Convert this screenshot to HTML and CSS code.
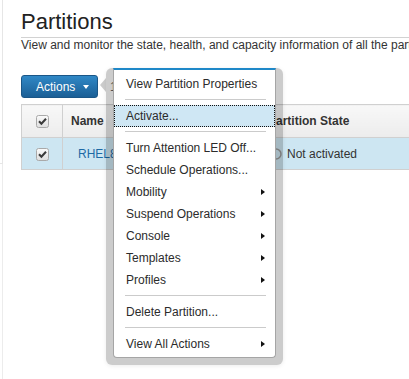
FILE: index.html
```html
<!DOCTYPE html>
<html lang="en">
<head>
    <meta charset="UTF-8">
    <meta name="viewport" content="width=device-width, initial-scale=1.0">
    <title>Partitions</title>
    <link rel="stylesheet" href="styles.css">
</head>
<body>

<div class="page">
    <!-- collapsed side navigation edge -->
    <div class="rail">
        <div class="rail-top"></div>
        <div class="rail-bottom"></div>
    </div>

    <main class="content">
        <h1>Partitions</h1>
        <p class="desc">View and monitor the state, health, and capacity information of all the partitions on the system.</p>

        <div class="toolbar">
            <button class="actions-btn">Actions <span class="caret"></span></button>
            <span class="sel-count">1 of 1 selected</span>
        </div>

        <table class="grid">
            <tr class="head">
                <th class="col-check">
                    <svg class="cb" width="13" height="13" viewBox="0 0 13 13">
                        <defs>
                            <linearGradient id="cbg" x1="0" y1="0" x2="0" y2="1">
                                <stop offset="0" stop-color="#fbfbfb"/>
                                <stop offset="1" stop-color="#dedede"/>
                            </linearGradient>
                        </defs>
                        <rect x="0.5" y="0.5" width="12" height="12" rx="2" fill="url(#cbg)" stroke="#a9a9a9"/>
                        <path d="M3 6.3 L5.4 8.8 L10 3.8" fill="none" stroke="#3a3a3a" stroke-width="2"/>
                    </svg>
                </th>
                <th class="col-name">Name</th>
                <th class="col-state">Partition State</th>
            </tr>
            <tr class="row selected">
                <td class="col-check">
                    <svg class="cb" width="13" height="13" viewBox="0 0 13 13">
                        <rect x="0.5" y="0.5" width="12" height="12" rx="2" fill="url(#cbg)" stroke="#a9a9a9"/>
                        <path d="M3 6.3 L5.4 8.8 L10 3.8" fill="none" stroke="#3a3a3a" stroke-width="2"/>
                    </svg>
                </td>
                <td class="col-name"><a href="#" class="name-link">RHEL8_LPAR_01</a></td>
                <td class="col-state">
                    <span class="state">
                        <svg width="12" height="12" viewBox="0 0 12 12"><circle cx="6" cy="6" r="5" fill="none" stroke="#9a9a9a" stroke-width="1.5"/></svg>
                        Not activated
                    </span>
                </td>
            </tr>
        </table>
    </main>
</div>

<!-- Actions popover menu -->
<div class="popover">
    <div class="pop-arrow"></div>
    <div class="pop-frame">
        <ul class="menu">
            <li class="item">View Partition Properties</li>
            <li class="sep"></li>
            <li class="item focused">Activate...</li>
            <li class="sep"></li>
            <li class="item">Turn Attention LED Off...</li>
            <li class="item">Schedule Operations...</li>
            <li class="item sub">Mobility</li>
            <li class="item sub">Suspend Operations</li>
            <li class="item sub">Console</li>
            <li class="item sub">Templates</li>
            <li class="item sub">Profiles</li>
            <li class="sep"></li>
            <li class="item">Delete Partition...</li>
            <li class="sep"></li>
            <li class="item sub">View All Actions</li>
        </ul>
    </div>
</div>

</body>
</html>
```

FILE: styles.css
```css
body {
    margin: 0;
    font-family: "Liberation Sans", Arial, sans-serif;
    font-size: 12px;
    color: #333;
    background: #fff;
    overflow: hidden;
}
.page {
    display: flex;
    height: 379px;
}
.rail {
    width: 3px;
    flex: none;
    display: flex;
    flex-direction: column;
}
.rail-top {
    height: 163px;
    border-right: 1px solid #e6e6e6;
    border-bottom: 1px solid #e6e6e6;
}
.rail-bottom {
    flex: 1;
    border-right: 1px solid #ececec;
}
.content {
    flex: 1;
    min-width: 0;
    padding-left: 18px;
    overflow: hidden;
}
h1 {
    margin: 9px 0 0;
    font-size: 22px;
    line-height: 26px;
    font-weight: normal;
    color: #222;
    padding-bottom: 2px;
    border-bottom: 1px solid #d2d2d2;
}
.desc {
    margin: 0;
    line-height: 14px;
    white-space: nowrap;
    color: #333;
}
.toolbar {
    display: flex;
    align-items: center;
    margin-top: 23px;
}
.actions-btn {
    display: flex;
    align-items: center;
    height: 23px;
    width: 77px;
    padding: 0 0 0 14px;
    font-family: inherit;
    font-size: 12px;
    color: #fff;
    background: linear-gradient(#3088c6, #1b5f96);
    border: 1px solid #1a5687;
    border-radius: 3px;
}
.caret {
    margin-left: 8px;
    width: 0;
    height: 0;
    border-left: 3.5px solid transparent;
    border-right: 3.5px solid transparent;
    border-top: 4px solid #fff;
}
.sel-count {
    margin-left: 12px;
    color: #666;
}
.grid {
    margin-top: 6px;
    border-collapse: collapse;
    width: 520px;
    table-layout: fixed;
}
.grid th, .grid td {
    border: 1px solid #d0d0d0;
    text-align: left;
    white-space: nowrap;
    overflow: hidden;
}
.head th {
    height: 32px;
    background: linear-gradient(#f8f8f8, #ececec);
    font-weight: bold;
    padding: 0 8px;
}
.row td {
    height: 31px;
    padding: 0 8px;
}
.row.selected td {
    background: #cde6f2;
}
.col-check {
    width: 40px;
    text-align: center !important;
    padding: 0 !important;
}
.cb {
    display: block;
    margin: 1px auto 0;
}
.col-name {
    width: 180px;
}
.row .col-name {
    padding-left: 15px;
}
.name-link {
    color: #1d6aa5;
    text-decoration: none;
}
.row .col-state {
    padding-left: 10px;
}
.state {
    display: flex;
    align-items: center;
    gap: 5px;
}

/* popover menu */
.popover {
    position: absolute;
    left: 100px;
    top: 68px;
    display: flex;
    align-items: flex-start;
}
.pop-arrow {
    margin-top: 10px;
    width: 0;
    height: 0;
    border-top: 7px solid transparent;
    border-bottom: 7px solid transparent;
    border-right: 6px solid rgba(0, 0, 0, 0.2);
}
.pop-frame {
    padding: 0 7px 7px;
    background: rgba(0, 0, 0, 0.2);
    border-radius: 6px;
    box-shadow: 0 1px 4px rgba(0, 0, 0, 0.08);
}
.menu {
    list-style: none;
    margin: 0;
    padding: 3px 0 2px;
    width: 161px;
    background: #fff;
    border: 1px solid #a5a5a5;
    border-top: 2px solid #1e88c8;
    border-radius: 0 0 4px 4px;
}
.item {
    position: relative;
    box-sizing: border-box;
    height: 22px;
    line-height: 20px;
    padding-left: 11px;
    color: #2b2b2b;
    border: 1px dotted transparent;
}
.item.focused {
    background: #cfe7f4;
    border-color: #111;
}
.item.sub::after {
    content: "";
    position: absolute;
    right: 9px;
    top: 7px;
    border-top: 3.5px solid transparent;
    border-bottom: 3.5px solid transparent;
    border-left: 4px solid #111;
}
.sep {
    height: 1px;
    margin: 4px 9px 5px 11px;
    background: #cbcbcb;
}
```
